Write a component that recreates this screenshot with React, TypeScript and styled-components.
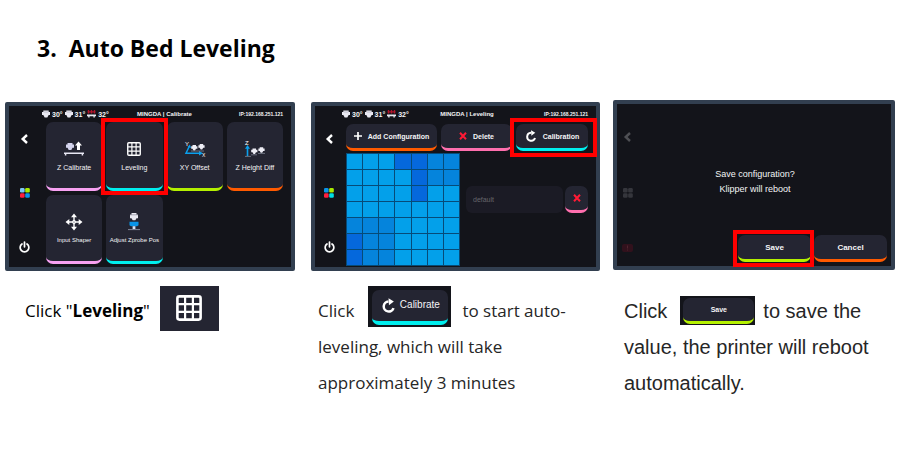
import React from 'react';
import styled, { createGlobalStyle, css } from 'styled-components';

const color = {
  frame: '#323f50',
  screen: '#13141a',
  tile: '#242532',
  pink: '#f7a1f2',
  rose: '#ff6fae',
  cyan: '#00eeee',
  lime: '#b4f000',
  orange: '#ff5a00',
  red: '#ff0000',
  cross: '#ff1a35',
  blue: '#03a0ea',
};

const GlobalStyle = createGlobalStyle`
  *, *::before, *::after { box-sizing: border-box; }
  body { margin: 0; background: #fff; }
  button, input { font: inherit; color: inherit; }
`;

const Page = styled.main`
  padding: 30px 5px 20px;
  font-family: 'Open Sans', 'Noto Sans', sans-serif;
  color: #262626;
`;

const Title = styled.h1`
  margin: 0 0 34px;
  padding-left: 32px;
  font-size: 23px;
  line-height: 36px;
  font-weight: 700;
  color: #000;
  white-space: pre-wrap;
`;

const Steps = styled.div`
  display: grid;
  grid-template-columns: 306fr 302fr 282fr;
  align-items: start;
`;

const Step = styled.section<{ $gutter: number; $top?: number }>`
  min-width: 0;
  padding-top: ${(p) => p.$top ?? 0}px;
  padding-right: ${(p) => p.$gutter}px;
`;

const Screen = styled.div<{ $rail: number }>`
  display: grid;
  grid-template-columns: ${(p) => p.$rail}px 1fr;
  min-height: 169px;
  border: 4px solid ${color.frame};
  border-radius: 2px;
  background: ${color.screen};
  color: #f4f4f6;
  font-family: 'Liberation Sans', Arial, sans-serif;
  font-size: 7px;
`;

const Rail = styled.nav<{ $inset: number; $dim?: boolean }>`
  display: flex;
  flex-direction: column;
  justify-content: space-between;
  align-items: center;
  padding: 28px ${(p) => p.$inset}px 14px 0;
  ${(p) => p.$dim && css`opacity: 0.25;`}
`;

const RailButton = styled.button`
  display: flex;
  padding: 0;
  border: 0;
  background: none;
`;

const Body = styled.div`
  display: flex;
  flex-direction: column;
  min-width: 0;
  padding-right: 8px;
`;

const StatusBar = styled.header`
  display: grid;
  grid-template-columns: 1fr auto 1fr;
  align-items: center;
  height: 16px;
  font-weight: 700;
  font-size: 6px;
  white-space: nowrap;
`;

const Temps = styled.div`
  display: flex;
  align-items: center;
  gap: 2px;
  margin-left: -4px;
  font-size: 7px;
`;

const Ip = styled.span`
  justify-self: end;
  font-size: 5px;
`;

const Tiles = styled.div`
  display: grid;
  grid-template-columns: repeat(4, 1fr);
  grid-auto-rows: 69px;
  gap: 4px;
`;

const KeyButton = styled.button<{ $accent: string }>`
  position: relative;
  display: flex;
  align-items: center;
  justify-content: center;
  gap: 6px;
  padding: 0;
  border: 0;
  border-bottom: 3px solid ${(p) => p.$accent};
  border-radius: 7px;
  background: ${color.tile};
  font-weight: 700;
  font-size: 7px;
  white-space: nowrap;
`;

const TileButton = styled(KeyButton)<{ $small?: boolean }>`
  flex-direction: column;
  min-width: 0;
  font-weight: 400;
  font-size: ${(p) => (p.$small ? 6 : 7)}px;
`;

const TileIcon = styled.span`
  display: grid;
  place-items: center;
  height: 18px;
`;

const Highlight = styled.span<{ $inset: string }>`
  position: absolute;
  inset: ${(p) => p.$inset};
  border: 4px solid ${color.red};
  pointer-events: none;
  z-index: 1;
`;

const Toolbar = styled.div`
  display: grid;
  grid-template-columns: 91fr 71fr 72fr;
  grid-auto-rows: 27px;
  gap: 4px;
  margin: 2px 0;
`;

const MeshRow = styled.div`
  display: grid;
  grid-template-columns: 114fr 122fr;
  align-items: start;
  gap: 6px;
`;

const Mesh = styled.div`
  display: grid;
  grid-template-columns: repeat(7, 1fr);
  grid-auto-rows: 15px;
  gap: 1px;
  border: 1px solid #064b78;
  background: #064b78;
`;

const Cell = styled.span<{ $level: string }>`
  background: ${(p) => ({ L: color.blue, M: '#0584dc', D: '#0568dc' })[p.$level]};
`;

const Profile = styled.form`
  display: grid;
  grid-template-columns: 1fr 23px;
  grid-template-rows: 27px;
  gap: 2px;
  margin-top: 33px;
`;

const NameInput = styled.input`
  min-width: 0;
  padding: 0 7px;
  border: 0;
  border-radius: 6px;
  background: #1b1b25;
  color: #66666b;
  font-size: 7px;
`;

const Dialog = styled.div`
  display: flex;
  flex-direction: column;
  justify-content: space-between;
  min-height: 162px;
  padding: 63px 4px 4px 0;
`;

const Message = styled.p`
  margin: 0;
  padding-right: 25px;
  text-align: center;
  font-size: 9px;
  line-height: 15px;
`;

const Actions = styled.div`
  display: grid;
  grid-template-columns: 73px 73px;
  grid-auto-rows: 27px;
  justify-content: end;
  gap: 3px;
`;

const DialogButton = styled(KeyButton)`
  font-size: 8px;
`;

const Caption = styled.p`
  margin: 22px 0 0;
  padding-left: 7px;
  font-size: 17px;
  line-height: 36px;
`;

const FirstCaption = styled(Caption)`
  padding-left: 20px;
  color: #000;
`;

const SansCaption = styled(Caption)`
  margin-top: 23px;
  padding-left: 11px;
  font-family: 'Liberation Sans', Arial, sans-serif;
  font-size: 20px;
`;

const Chip = styled.span<{ $w: number; $h: number; $gap: string; $pad: string }>`
  display: inline-grid;
  width: ${(p) => p.$w}px;
  height: ${(p) => p.$h}px;
  margin: ${(p) => p.$gap};
  padding: ${(p) => p.$pad};
  vertical-align: middle;
  background: ${color.screen};
  color: #f4f4f6;
  line-height: 1;
  font-family: 'Liberation Sans', Arial, sans-serif;
`;

const IconChip = styled(Chip)`
  place-items: center;
  background: ${color.tile};
`;

const CalibrateButton = styled(KeyButton)`
  gap: 4px;
  font-weight: 400;
  font-size: 10px;
  border-bottom-width: 4px;
`;

const Back = () => (
  <svg width="9" height="10" viewBox="0 0 8 10" fill="none" stroke="#fff" strokeWidth="2.4">
    <path d="M6.500 1 2.200 5l4.300 4" />
  </svg>
);

const Apps = ({ fills }: { fills: string[] }) => (
  <svg width="10" height="10" viewBox="0 0 10 10">
    <rect width="4.6" height="4.6" rx="1.3" fill={fills[0]} />
    <rect x="5.2" width="4.6" height="4.6" rx="1.3" fill={fills[1]} />
    <rect y="5.2" width="4.6" height="4.6" rx="1.3" fill={fills[2]} />
    <rect x="5.2" y="5.2" width="4.6" height="4.6" rx="1.3" fill={fills[3]} />
  </svg>
);

const Power = () => (
  <svg width="11" height="12" viewBox="0 0 10 11" fill="none" stroke="#fff" strokeWidth="1.6" strokeLinecap="round">
    <path d="M2.7 2.700a4 4 0 1 0 4.600 0M5 1v4.300" />
  </svg>
);

const Alert = () => (
  <svg width="11" height="8" viewBox="0 0 11 8">
    <rect width="11" height="8" rx="2" fill="#8a0b22" />
    <path d="M5.5 1.500v3M5.500 5.500v1" stroke="#ff5570" />
  </svg>
);

const Nozzle = () => (
  <svg width="8" height="8" viewBox="0 0 9 8">
    <path d="M1.500 0h6v1.800H9v3.400H7.500L6 8H3L1.500 5.200H0V1.800h1.500z" fill="#e9e9f2" />
    <path d="M2 1.800h5" stroke="#8c8c9c" strokeWidth=".5" />
  </svg>
);

const HeatBed = () => (
  <svg width="9" height="8" viewBox="0 0 9 8">
    <path d="M1.500 0v3.600M4.500 0v3.600M7.500 0v3.600M.500 1.800h8" stroke="#b3142c" strokeWidth="1.300" />
    <path d="M0 4.400h9v1.800H7.800v1.200H6.400V6.200H2.600v1.200H1.200V6.200H0z" fill="#e9e9f2" />
  </svg>
);

const ZCalibrate = () => (
  <svg width="22" height="18" viewBox="0 0 22 18">
    <path d="M4.500 3h5v1.600h1.500v3.200H9.500L8.300 10H5.700L4.500 7.800H3V4.600h1.500z" fill="#d4d4ee" />
    <path d="M14 10V5.600h-2L15.500 1.500 19 5.600h-2V10z" fill="#fff" />
    <path d="M1 13.300h20M2.600 13v2.400M19.400 13v2.400" stroke="#e8e8f4" strokeWidth="1.500" />
  </svg>
);

const Grid = ({ size }: { size: number }) => (
  <svg width={size} height={size} viewBox="0 0 26 26" fill="none" stroke="#fff">
    <rect x="1.400" y="1.400" width="23.200" height="23.200" rx="2" strokeWidth="2.600" />
    <path d="M9.100 2v22M16.900 2v22M2 9.100h22M2 16.900h22" strokeWidth="2.200" />
  </svg>
);

const XYOffset = () => (
  <svg width="22" height="18" viewBox="0 0 22 18">
    <path d="M5 7 2 13.200h15" fill="none" stroke="#0aa0ee" strokeWidth="1.500" />
    <path d="m3.500 7 2.400-2.600L7 8zM15 11l4 2.200-4 2.200z" fill="#0aa0ee" />
    <path d="M8.500 5h3.500v1.200h1.400v2.600H12L11 10.500H9.500l-1-1.700H7.200V6.200h1.300zM15.700 4h3.500v1.200h1.400v2.600h-1.400l-1 1.700h-1.500l-1-1.700h-1.300V5.200h1.300z" fill="#eeeef6" />
    <path d="M7 11h13" stroke="#8c92a4" strokeWidth=".7" />
    <text x="1" y="6" fontSize="6" fill="#fff">Y</text>
    <text x="18" y="17" fontSize="5" fill="#fff">X</text>
  </svg>
);

const ZHeight = () => (
  <svg width="22" height="18" viewBox="0 0 22 18">
    <path d="M3.500 16V8" stroke="#0aa0ee" strokeWidth="1.600" />
    <path d="M1 8.800 3.500 5 6 8.800z" fill="#0aa0ee" />
    <path d="M8.500 8.500H12v1.200h1.400v2.600H12L11 14H9.500l-1-1.700H7.200V9.700h1.300zM15.700 7.200h3.500v1.200h1.400V11h-1.400l-1 1.700h-1.500l-1-1.700h-1.300V8.400h1.300z" fill="#eeeef6" />
    <path d="M1 16.400h6M7 14.800h6M14 13.400h7" stroke="#8c92a4" strokeWidth=".7" />
    <text x="1" y="4.500" fontSize="6" fill="#fff">Z</text>
  </svg>
);

const Move = () => (
  <svg width="18" height="18" viewBox="0 0 18 18" fill="#fff">
    <path d="M9 2v14M2 9h14" stroke="#fff" strokeWidth="1.400" />
    <path d="M9 .500l3 3.800H6zM9 17.500l3-3.800H6zM.500 9l3.800-3v6zM17.500 9l-3.800-3v6z" />
    <circle cx="9" cy="9" r="1.900" />
    <circle cx="9" cy="9" r=".6" fill={color.tile} />
  </svg>
);

const Probe = () => (
  <svg width="18" height="18" viewBox="0 0 18 18">
    <path d="M6.500 0h5v1.800H13v3.400h-1.500L10.300 7.200H7.700L6.500 5.200H5V1.800h1.500z" fill="#e9e9f2" />
    <path d="M5 1.800h8" stroke="#8c8c9c" strokeWidth=".7" />
    <path d="M4.500 8.800h9v3.400l-1.500 1H6l-1.500-1z" fill="#0a95e8" />
    <path d="M7.600 13.200h2.800V16H7.600z" fill="#d6e3f6" />
    <path d="M3 16.600h12" stroke="#8c92a4" strokeWidth=".9" />
  </svg>
);

const Plus = () => (
  <svg width="8" height="8" viewBox="0 0 8 8" stroke="#fff" strokeWidth="1.700">
    <path d="M4 0v8M0 4h8" />
  </svg>
);

const Cross = () => (
  <svg width="8" height="8" viewBox="0 0 8 8" stroke={color.cross} strokeWidth="2">
    <path d="m1 .800 6 6.400M7 .800 1 7.200" />
  </svg>
);

const Reload = ({ size }: { size: number }) => (
  <svg width={size} height={size} viewBox="0 0 14 14">
    <path d="M7 3.200A4.700 4.700 0 1 0 11.700 9.400" fill="none" stroke="#fff" strokeWidth="2.300" />
    <path d="M7 .200 12 3.200 7.400 6.800z" fill="#fff" />
  </svg>
);

const Status = ({ title }: { title: string }) => (
  <StatusBar>
    <Temps>
      <Nozzle />30° <Nozzle />31° <HeatBed />32°
    </Temps>
    <span>{title}</span>
    <Ip>IP:192.168.251.121</Ip>
  </StatusBar>
);

const SideRail = ({ inset, dim, fills }: { inset: number; dim?: boolean; fills: string[] }) => (
  <Rail $inset={inset} $dim={dim}>
    <RailButton aria-label="Back"><Back /></RailButton>
    <RailButton aria-label="Home"><Apps fills={fills} /></RailButton>
    <RailButton aria-label={dim ? 'Alerts' : 'Power'}>{dim ? <Alert /> : <Power />}</RailButton>
  </Rail>
);

const tiles = [
  { label: 'Z Calibrate', accent: color.pink, icon: <ZCalibrate /> },
  { label: 'Leveling', accent: color.cyan, icon: <Grid size={14} />, marked: true },
  { label: 'XY Offset', accent: color.lime, icon: <XYOffset /> },
  { label: 'Z Height Diff', accent: color.orange, icon: <ZHeight /> },
  { label: 'Input Shaper', accent: color.pink, icon: <Move />, small: true },
  { label: 'Adjust Zprobe Pos', accent: color.cyan, icon: <Probe />, small: true },
];

const meshLevels = ['LLLDDMM', 'LLLLDMM', 'LLLLDLL', 'LLLLLLL', 'MMMLLLL', 'DMMLLLL', 'DMMLLLL'].join('').split('');

export default function App() {
  return (
    <>
      <GlobalStyle />
      <Page>
        <Title>{'3.  Auto Bed Leveling'}</Title>
        <Steps>
          <Step $gutter={16} $top={2}>
            <Screen $rail={37}>
              <SideRail inset={6} fills={['#7cc7f5', '#a8ea00', '#ff1f3d', '#0a95e8']} />
              <Body>
                <Status title="MINGDA | Calibrate" />
                <Tiles>
                  {tiles.map((t) => (
                    <TileButton key={t.label} $accent={t.accent} $small={t.small}>
                      <TileIcon>{t.icon}</TileIcon>
                      {t.label}
                      {t.marked && <Highlight $inset="-4px -5px -7px -5px" />}
                    </TileButton>
                  ))}
                </Tiles>
              </Body>
            </Screen>
            <FirstCaption>
              Click "<strong>Leveling</strong>"
              <IconChip $w={59} $h={45} $gap="-12px 0 -4px 10px" $pad="0"><Grid size={26} /></IconChip>
            </FirstCaption>
          </Step>

          <Step $gutter={13} $top={2}>
            <Screen $rail={31}>
              <SideRail inset={3} fills={['#0a95e8', '#a8ea00', '#ff1f3d', '#00dfe4']} />
              <Body>
                <Status title="MINGDA  | Leveling" />
                <Toolbar>
                  <KeyButton $accent={color.orange}><Plus />Add Configuration</KeyButton>
                  <KeyButton $accent={color.rose}><Cross />Delete</KeyButton>
                  <KeyButton $accent={color.cyan}>
                    <Reload size={12} />Calibration
                    <Highlight $inset="-6px -9px -9px -6px" />
                  </KeyButton>
                </Toolbar>
                <MeshRow>
                  <Mesh role="img" aria-label="Bed mesh">
                    {meshLevels.map((level, i) => <Cell key={i} $level={level} />)}
                  </Mesh>
                  <Profile onSubmit={(e) => e.preventDefault()}>
                    <NameInput aria-label="Profile name" defaultValue="default" />
                    <KeyButton $accent={color.rose} aria-label="Remove profile"><Cross /></KeyButton>
                  </Profile>
                </MeshRow>
              </Body>
            </Screen>
            <Caption>
              Click
              <Chip $w={83} $h={41} $gap="-12px 11px 0 14px" $pad="4px 3px 2px 4px">
                <CalibrateButton $accent={color.cyan}><Reload size={15} />Calibrate</CalibrateButton>
              </Chip>
              to start auto-leveling, which will take approximately 3 minutes
            </Caption>
          </Step>

          <Step $gutter={0}>
            <Screen $rail={31}>
              <SideRail dim inset={10} fills={['#9a9aa2', '#9a9aa2', '#9a9aa2', '#9a9aa2']} />
              <Dialog role="dialog" aria-label="Save configuration">
                <Message>Save configuration?<br />Klipper will reboot</Message>
                <Actions>
                  <DialogButton $accent={color.lime}>
                    Save
                    <Highlight $inset="-5px -3px -8px -5px" />
                  </DialogButton>
                  <DialogButton $accent={color.orange}>Cancel</DialogButton>
                </Actions>
              </Dialog>
            </Screen>
            <SansCaption>
              Click
              <Chip $w={75} $h={29} $gap="-4px 8px 0 13px" $pad="2px 1px 1px 3px">
                <KeyButton $accent={color.lime}>Save</KeyButton>
              </Chip>
              to save the value, the printer will reboot automatically.
            </SansCaption>
          </Step>
        </Steps>
      </Page>
    </>
  );
}
